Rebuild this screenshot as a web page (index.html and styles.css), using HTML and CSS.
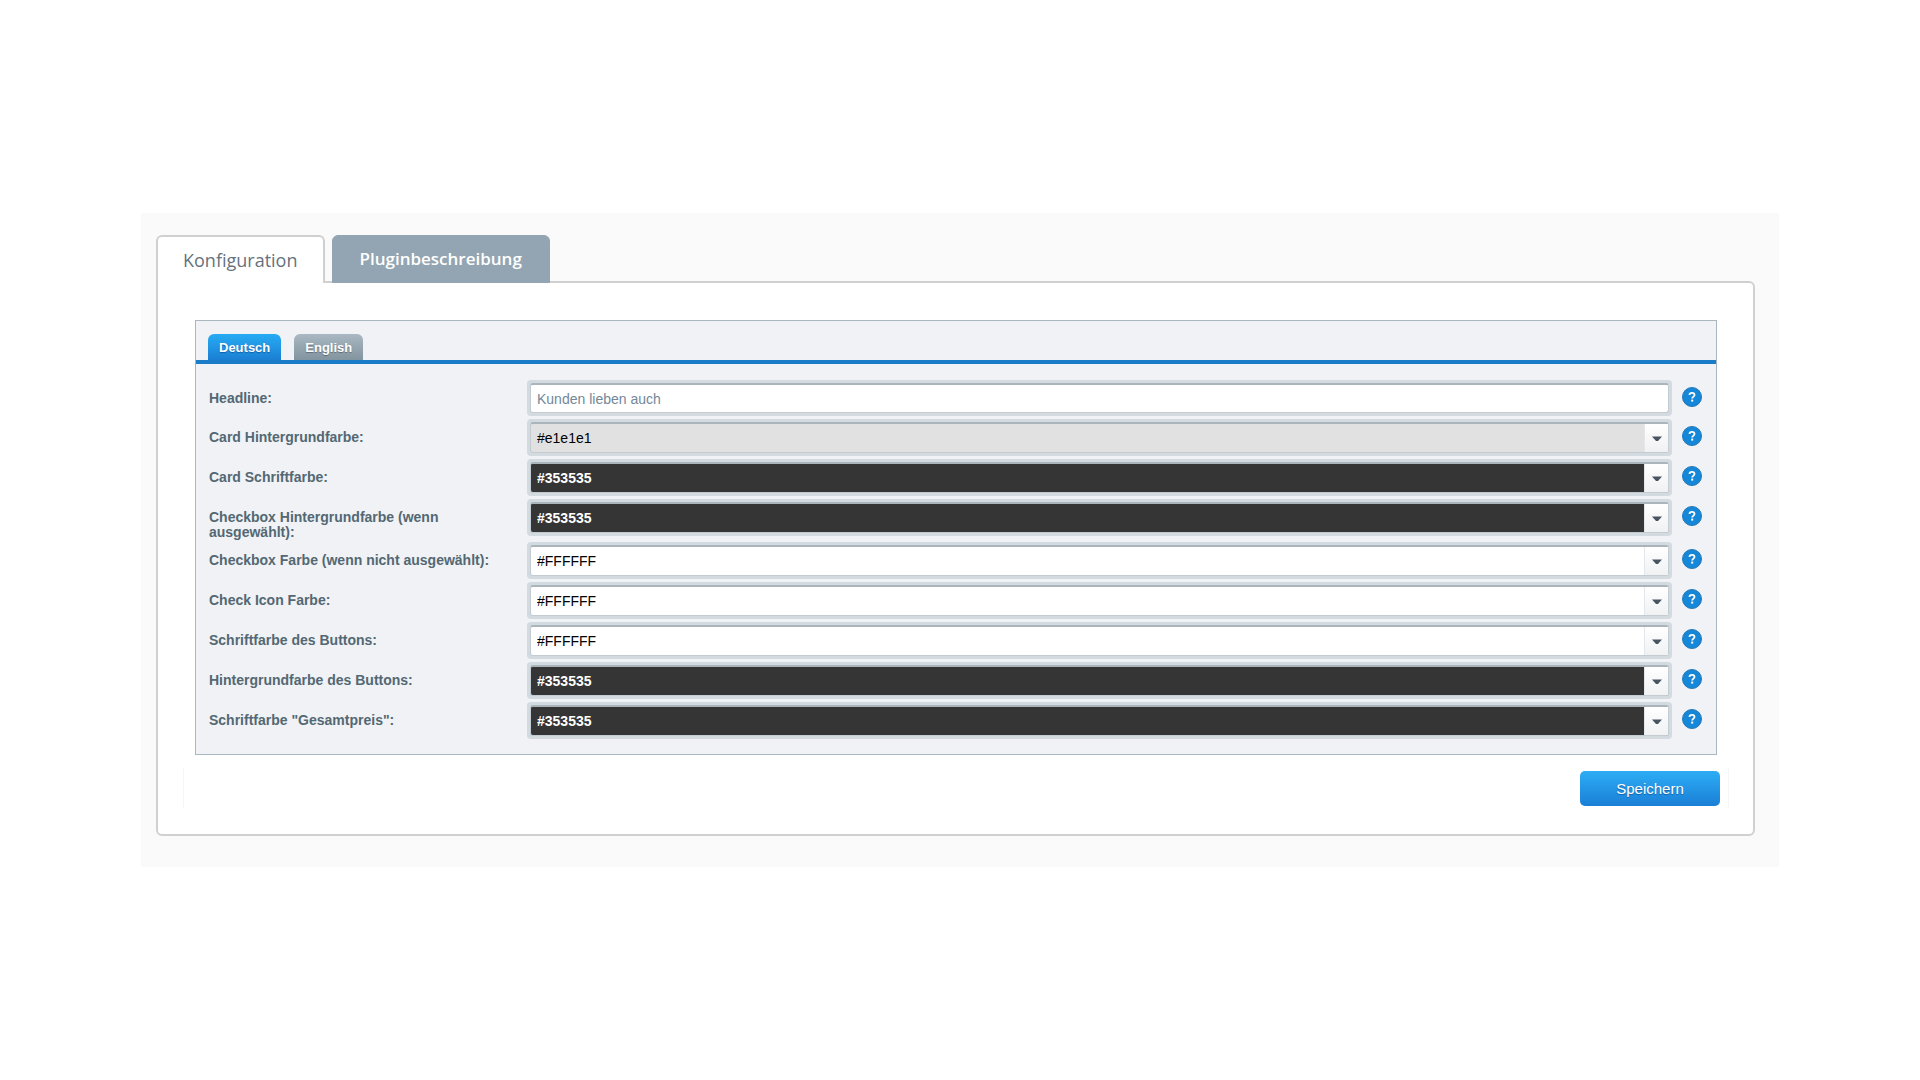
FILE: index.html
```html
<!DOCTYPE html>
<html lang="de">
<head>
<meta charset="utf-8">
<title>Plugin-Konfiguration</title>
<link rel="stylesheet" href="styles.css">
</head>
<body>
<svg class="sprite" aria-hidden="true">
  <symbol id="help" viewBox="0 0 20 20">
    <circle cx="10" cy="10" r="9.5" fill="#1487d8" stroke="#2477b8"/>
    <path d="M7.5 8C7.5 6.5 8.5 5.8 10 5.8s2.5.8 2.5 2.1c0 1.7-2.3 1.7-2.3 3.6" fill="none" stroke="#fff" stroke-width="1.8"/>
    <rect x="9.2" y="12.6" width="2" height="2" fill="#fff"/>
  </symbol>
  <symbol id="arrow" viewBox="0 0 10 6">
    <path d="M0 0.5h10L6 5H4z" fill="#475562"/>
  </symbol>
</svg>
<main class="window">
  <nav class="tabs">
    <button class="tab tab-active" type="button">Konfiguration</button>
    <button class="tab" type="button">Pluginbeschreibung</button>
  </nav>
  <form class="panel">
    <section class="fieldset">
      <div class="langs">
        <button class="lang lang-active" type="button">Deutsch</button>
        <button class="lang" type="button">English</button>
      </div>
      <div class="rows">
        <div class="row">
          <label for="f1">Headline:</label>
          <div class="frame"><input id="f1" class="control text" type="text" value="Kunden lieben auch"></div>
          <button class="help" type="button" aria-label="Hilfe"><svg><use href="#help"/></svg></button>
        </div>
        <div class="row">
          <label for="f2">Card Hintergrundfarbe:</label>
          <div class="frame"><select id="f2" class="control grey"><option>#e1e1e1</option></select><span class="trigger"><svg><use href="#arrow"/></svg></span></div>
          <button class="help" type="button" aria-label="Hilfe"><svg><use href="#help"/></svg></button>
        </div>
        <div class="row">
          <label for="f3">Card Schriftfarbe:</label>
          <div class="frame"><select id="f3" class="control dark"><option>#353535</option></select><span class="trigger"><svg><use href="#arrow"/></svg></span></div>
          <button class="help" type="button" aria-label="Hilfe"><svg><use href="#help"/></svg></button>
        </div>
        <div class="row">
          <label for="f4">Checkbox Hintergrundfarbe (wenn ausgewählt):</label>
          <div class="frame"><select id="f4" class="control dark"><option>#353535</option></select><span class="trigger"><svg><use href="#arrow"/></svg></span></div>
          <button class="help" type="button" aria-label="Hilfe"><svg><use href="#help"/></svg></button>
        </div>
        <div class="row">
          <label for="f5">Checkbox Farbe (wenn nicht ausgewählt):</label>
          <div class="frame"><select id="f5" class="control white"><option>#FFFFFF</option></select><span class="trigger"><svg><use href="#arrow"/></svg></span></div>
          <button class="help" type="button" aria-label="Hilfe"><svg><use href="#help"/></svg></button>
        </div>
        <div class="row">
          <label for="f6">Check Icon Farbe:</label>
          <div class="frame"><select id="f6" class="control white"><option>#FFFFFF</option></select><span class="trigger"><svg><use href="#arrow"/></svg></span></div>
          <button class="help" type="button" aria-label="Hilfe"><svg><use href="#help"/></svg></button>
        </div>
        <div class="row">
          <label for="f7">Schriftfarbe des Buttons:</label>
          <div class="frame"><select id="f7" class="control white"><option>#FFFFFF</option></select><span class="trigger"><svg><use href="#arrow"/></svg></span></div>
          <button class="help" type="button" aria-label="Hilfe"><svg><use href="#help"/></svg></button>
        </div>
        <div class="row">
          <label for="f8">Hintergrundfarbe des Buttons:</label>
          <div class="frame"><select id="f8" class="control dark"><option>#353535</option></select><span class="trigger"><svg><use href="#arrow"/></svg></span></div>
          <button class="help" type="button" aria-label="Hilfe"><svg><use href="#help"/></svg></button>
        </div>
        <div class="row">
          <label for="f9">Schriftfarbe "Gesamtpreis":</label>
          <div class="frame"><select id="f9" class="control dark"><option>#353535</option></select><span class="trigger"><svg><use href="#arrow"/></svg></span></div>
          <button class="help" type="button" aria-label="Hilfe"><svg><use href="#help"/></svg></button>
        </div>
      </div>
    </section>
    <div class="toolbar"><button class="save" type="button">Speichern</button></div>
  </form>
</main>
</body>
</html>
```
FILE: styles.css
```css
* { box-sizing: border-box; }

body {
  margin: 0;
  min-height: 100vh;
  padding: 0 141px;
  display: flex;
  align-items: center;
  background: #fff;
  font-family: "Liberation Sans", Arial, sans-serif;
  font-size: 14px;
}

button {
  margin: 0;
  padding: 0;
  border: 0;
  background: none;
  font-family: inherit;
  cursor: pointer;
}

.sprite { display: none; }

.window {
  flex: 1;
  padding: 22px 24px 31px 15px;
  background: #fafafa;
}

/* Main tabs */
.tabs {
  display: flex;
  gap: 7px;
}

.tab {
  height: 48px;
  padding: 0 27px;
  border: 1px solid #93a5b2;
  border-radius: 6px 6px 0 0;
  background: #93a5b2;
  color: #fff;
  font: 600 17px/24px "Open Sans", sans-serif;
}

.tab-active {
  position: relative;
  padding: 0 25px;
  border: 2px solid #d0d0d0;
  border-bottom: 0;
  background: #fff;
  color: #66727d;
  font-size: 18px;
  font-weight: 400;
}

.panel {
  margin-top: -2px;
  padding: 37px 24px 26px 25px;
  border: 2px solid #d0d0d0;
  border-radius: 0 6px 6px 6px;
  background: #fff;
}

.fieldset {
  margin: 0 12px;
  border: 1px solid #a9b7c1;
  background: #f0f2f5;
}

/* Language tabs */
.langs {
  display: flex;
  gap: 13px;
  padding: 13px 12px 0;
  border-bottom: 4px solid #1b7cc8;
}

.lang {
  height: 26px;
  padding: 0 11px;
  border-radius: 6px 6px 0 0;
  background: linear-gradient(#a9b8c2, #82949f);
  color: #fff;
  font-size: 13px;
  font-weight: 700;
  text-shadow: 0 1px 1px #5c6c78;
}

.lang-active {
  background: linear-gradient(#27acf4, #1b7fd3);
  text-shadow: 0 1px 1px #1260a8;
}

/* Form rows */
.rows {
  display: flex;
  flex-direction: column;
  gap: 3px;
  padding: 16px 14px 15px 13px;
}

.row {
  display: grid;
  grid-template-columns: 308px 1fr 20px;
  align-items: start;
}

.row label {
  padding: 11px 24px 0 0;
  margin-bottom: -1px;
  color: #536873;
  font-size: 14px;
  font-weight: 700;
  line-height: 15px;
}

.frame {
  display: grid;
  grid-template-columns: 1fr 25px;
  margin: 0 10px;
  padding: 3px;
  border-radius: 4px;
  background: #d3dbe0;
}

.control {
  grid-area: 1 / 1 / 2 / 3;
  width: 100%;
  height: 31px;
  margin: 0;
  padding: 0 6px;
  border: 1px solid #c3ccd2;
  border-top: 2px solid #a9b4bb;
  border-radius: 3px;
  background: #fff;
  color: #000;
  font-family: inherit;
  font-size: 14px;
  appearance: none;
}

.text { height: 30px; color: #73879a; }
.grey { background: #e1e1e1; }
.dark {
  background: #353535;
  color: #fff;
  font-weight: 700;
}

.trigger {
  grid-area: 1 / 2;
  position: relative;
  margin: 2px 1px 1px 0;
  display: grid;
  place-items: center;
  background: linear-gradient(#fff, #f0f1f3);
  border-left: 1px solid #e3e7ea;
  pointer-events: none;
}

.trigger svg { width: 10px; height: 6px; margin-top: 2px; }

.help { margin-top: 7px; height: 20px; }
.help svg { display: block; width: 20px; height: 20px; }

/* Footer */
.toolbar {
  display: flex;
  justify-content: flex-end;
  margin-top: 13px;
  padding: 3px 8px 2px;
  border: solid #f6f6f6;
  border-width: 0 1px;
}

.save {
  width: 140px;
  height: 35px;
  border-radius: 5px;
  background: linear-gradient(#2cadf5, #1a7fd6);
  color: #fff;
  font-size: 15px;
  text-shadow: 0 1px 1px #1260a8;
}
```
